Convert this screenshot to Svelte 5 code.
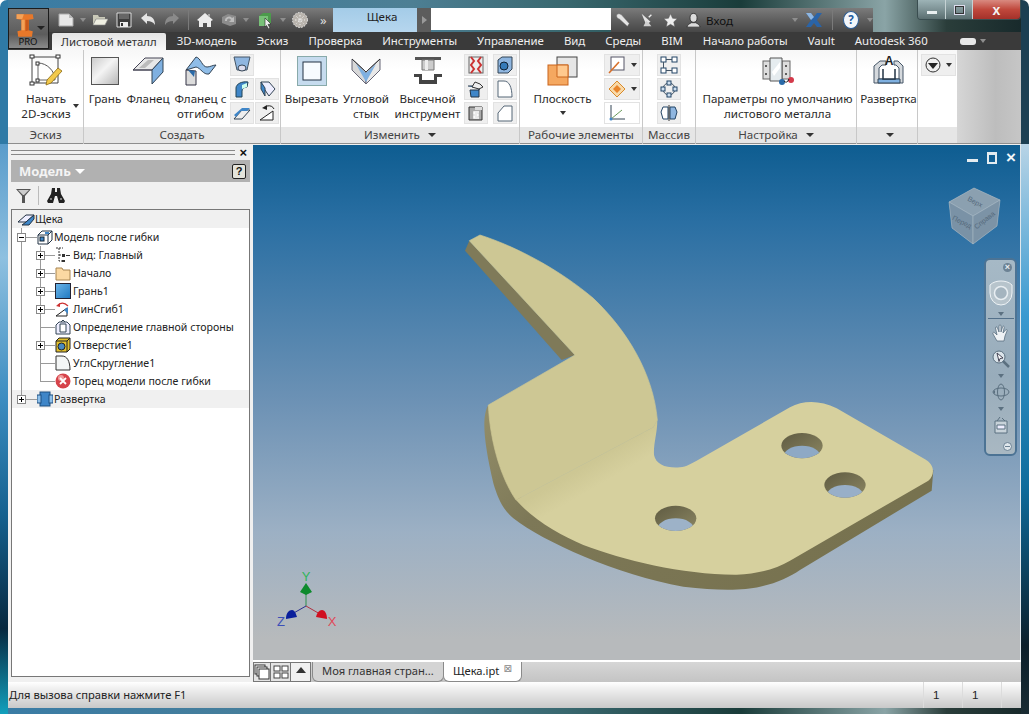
<script>
  const menu = ['3D-модель', 'Эскиз', 'Проверка', 'Инструменты', 'Управление', 'Вид', 'Среды', 'BIM', 'Начало работы', 'Vault', 'Autodesk 360'];
  const holes = [
    { x: 1056, y: 677, see: '#8ea9c5' },
    { x: 1185, y: 795, see: '#98afc8' },
    { x: 677, y: 895, see: '#9db2c8' }
  ];
</script>

<div class="window">
  <div class="titlebar">
    <div class="appbtn">
      <svg width="21" height="27" viewBox="0 0 26 30"><path d="M2 1h20l1 6-6 1v13l5 1-1 7H4l-1-7 5-1V8L2 7z" fill="#e8782a"/><path d="M8 8h4v13H8zM2 1h9l-2 6H2z" fill="#f4a258"/><path d="M17 8v13l-4 1V8z" fill="#c9591b"/></svg>
      <span class="caret app-caret"></span>
      <span class="pro">PRO</span>
    </div>
    <div class="qat">
      <svg width="16" height="16" viewBox="0 0 16 16"><path d="M1 2h10l4 4v8H1z" fill="#e8e8e8" stroke="#aaa"/><path d="M11 2v4h4" fill="#bbb"/></svg>
      <span class="caret dim tight"></span>
      <svg width="16" height="16" viewBox="0 0 16 16"><path d="M1 3h5l1 2h6v2H4L1 13z" fill="#c9c9b8"/><path d="M4 7h12l-3 6H1z" fill="#efefe2" stroke="#888" stroke-width=".6"/></svg>
      <svg width="16" height="16" viewBox="0 0 16 16"><path d="M1 1h14v14H1z" fill="#3d3d3d" stroke="#ddd"/><path d="M3 2h10v5H3z" fill="#666"/><path d="M4 10h8v5H4z" fill="#eee"/><path d="M5 11h2v3H5z" fill="#333"/></svg>
      <svg width="16" height="16" viewBox="0 0 16 16"><path d="M1 6l6-5v3c5 0 8 3 8 9-2-3-4-4-8-4v3z" fill="#e4e4e4"/></svg>
      <svg width="16" height="16" viewBox="0 0 16 16"><path d="M15 6L9 1v3C4 4 1 7 1 13c2-3 4-4 8-4v3z" fill="#8a8a8a"/></svg>
      <i class="qsep"></i>
      <svg width="16" height="16" viewBox="0 0 16 16"><path d="M0 8l8-7 8 7-2 1v6h-4v-4H6v4H2V9z" fill="#ececec"/><path d="M11 2h2v3l-2-1z" fill="#aaa"/></svg>
      <svg width="16" height="16" viewBox="0 0 16 16"><path d="M1 5l6-3 8 2v8l-6 2-8-3z" fill="#8c8c8c"/><path d="M4 9a4 4 0 0 1 7-3l2-1v5H8l2-2a2 2 0 0 0-4 1z" fill="#bdbdbd"/></svg>
      <span class="caret dim arrow-b"></span>
      <svg width="16" height="17" viewBox="0 0 16 17"><path d="M1 4l4-3h8v10l-3 3H1z" fill="#4c9a4c"/><path d="M1 4h9v10H1z" fill="#78c078"/><path d="M7 6l6 6-3 .5 2 3.5-1.500 1-2-3.500L7 15z" fill="#eee" stroke="#222" stroke-width=".6"/></svg>
      <span class="caret dim tight"></span>
      <svg width="16" height="16" viewBox="0 0 16 16"><circle cx="8" cy="8" r="7.500" fill="#b9b4ad"/><circle cx="8" cy="8" r="7.500" fill="none" stroke="#eee" stroke-dasharray="1.500 1.500" stroke-width="1"/><path d="M3 8h10M8 3v10M4.500 4.500l7 7M11.500 4.500l-7 7" stroke="#eee" stroke-dasharray="1.500 1.500"/></svg>
      <span class="more">»</span>
    </div>
    <div class="doc-title">Щека</div>
    <div class="search-arrow"><i></i></div>
    <div class="search"></div>
    <div class="tools">
      <svg width="18" height="18" viewBox="0 0 18 18"><path d="M2 3a4 4 0 0 1 6 1l8 9-2 3-9-8A4 4 0 0 1 2 3z" fill="#e4e4e4" stroke="#777" stroke-width=".5"/></svg>
      <svg width="18" height="18" viewBox="0 0 18 18"><path d="M3 2l10 9-5 3z" fill="#e4e4e4"/><path d="M8 10l-3 6h9l-3-4" fill="#cfcfcf"/><path d="M11 6l3-3" stroke="#eee" stroke-width="1.500"/></svg>
      <svg width="17" height="17" viewBox="0 0 17 17"><path d="M8.500 1l2.300 5 5.200.6-3.900 3.500 1.100 5.400-4.700-2.700-4.700 2.700 1.100-5.400L1 6.600 6.200 6z" fill="#eee" stroke="#555" stroke-width=".5"/></svg>
      <svg width="17" height="17" viewBox="0 0 17 17"><ellipse cx="8.500" cy="5.500" rx="4" ry="5" fill="#ddd" stroke="#333"/><path d="M1 16c1-3 3-4 5-5h5c2 1 4 2 5 5z" fill="#ddd" stroke="#333"/></svg>
      <span class="login">Вход</span>
      <span class="caret dim login-caret"></span>
      <svg width="18" height="16" viewBox="0 0 16 16"><path d="M0 1h5l3 4 3-4h5l-5 7 5 7h-5l-3-4-3 4H0l5-7z" fill="#2a64a8"/><path d="M0 1h5l3 4-3 3z" fill="#8fb6e0"/></svg>
      <i class="qsep sep-help"></i>
      <span class="help">?</span>
      <span class="caret dim"></span>
    </div>
    <div class="caption">
      <span class="cap-min"><i></i></span>
      <span class="cap-max"><i></i></span>
      <span class="cap-close">x</span>
    </div>
  </div>

  <div class="menubar">
    <span class="tab active">Листовой металл</span>
    {#each menu as item}
      <span class="tab">{item}</span>
    {/each}
    <span class="menu-extra"><i></i><span class="caret dim"></span></span>
  </div>

  <div class="ribbon">
    <section class="panel" style="width:76px">
      <div class="body">
        <div class="big wide">
          <div class="ico">
            <svg width="34" height="33" viewBox="0 0 34 33"><path d="M3 3h26v26H3z" fill="none" stroke="#444"/><path d="M9 9v17h17" fill="none" stroke="#666"/><path d="M9 9c9 0 17 8 17 17" fill="none" stroke="#555"/><g fill="#fff" stroke="#333"><rect x="1" y="1" width="4" height="3"/><rect x="27" y="1" width="4" height="3"/><rect x="1" y="28" width="4" height="3"/><rect x="7" y="8" width="3" height="3"/><rect x="7" y="25" width="3" height="3"/></g><path d="M18 26l11-12 4 3-11 12-5 2z" fill="#f2c94c" stroke="#8a6a12" stroke-width=".8"/></svg>
          </div>
          <span>Начать</span><span>2D-эскиз</span>
          <span class="caret drop-right"></span>
        </div>
      </div>
      <div class="label">Эскиз</div>
    </section>

    <section class="panel" style="width:197px">
      <div class="body">
        <div class="big" style="width:36px">
          <div class="ico"><svg width="28" height="28" viewBox="0 0 28 28"><defs><linearGradient id="face" x1="0" y1="0" x2="1" y2="1"><stop offset="0" stop-color="#c9c9c9"/><stop offset=".45" stop-color="#f4f4f4"/><stop offset="1" stop-color="#b5b5b5"/></linearGradient></defs><rect x=".5" y=".5" width="27" height="27" fill="url(#face)" stroke="#555"/></svg></div>
          <span>Грань</span>
        </div>
        <div class="big" style="width:50px">
          <div class="ico"><svg width="32" height="28" viewBox="0 0 32 28"><path d="M1 13L13 1h18L20 13z" fill="#e8e8e8" stroke="#445"/><path d="M20 13L31 1v14L20 27z" fill="#7fb0e0" stroke="#345"/><path d="M20 13h-19" stroke="#445"/><path d="M7 11l9-8h6l-9 8z" fill="#bbb"/></svg></div>
          <span>Фланец</span>
        </div>
        <div class="big" style="width:55px">
          <div class="ico"><svg width="32" height="30" viewBox="0 0 32 30"><path d="M1 14L11 1c5 1 6 10 11 10 3 0 6-2 9-2l-7 9c-6 1-8-6-13-7z" fill="#8fbde8" stroke="#345"/><path d="M1 14l10 1v14L1 29z" fill="#dcdcdc" stroke="#334"/><path d="M3 14l7 1-1 6z" fill="#2a6aa8"/></svg></div>
          <span>Фланец с</span><span>отгибом</span>
        </div>
        <div class="smalls two">
          <div class="sb"><svg width="18" height="18" viewBox="0 0 18 18"><path d="M1 1h16l-3 13H4z" fill="#8fb6e0" stroke="#456"/><ellipse cx="9" cy="12" rx="4" ry="3" fill="#dde" stroke="#345"/></svg></div>
          <div class="sb blank"></div>
          <div class="sb"><svg width="18" height="18" viewBox="0 0 18 18"><path d="M3 17V8c0-4 6-7 12-6l-1 5c-3 0-5 2-5 4v6z" fill="#3f86c8" stroke="#245"/><path d="M9 5l5-2v4l-5 2z" fill="#cfe"/></svg></div>
          <div class="sb"><svg width="18" height="18" viewBox="0 0 18 18"><path d="M3 2h8l6 7-6 7-6-9z" fill="#eef" stroke="#345"/><path d="M3 2v7l4 7V8z" fill="#3f86c8" stroke="#345"/></svg></div>
          <div class="sb"><svg width="18" height="18" viewBox="0 0 18 18"><path d="M1 15L9 6h8l-8 9z" fill="#eee" stroke="#345"/><path d="M1 11l8-7h8l-3 3H8l-5 6z" fill="#3f86c8"/></svg></div>
          <div class="sb"><svg width="18" height="18" viewBox="0 0 18 18"><path d="M2 16L15 7v9z" fill="#fff" stroke="#222"/><path d="M9 2a6 5 0 0 1 7 3" fill="none" stroke="#222"/><path d="M4 4l5-3v5z" fill="#222"/></svg></div>
        </div>
      </div>
      <div class="label">Создать</div>
    </section>

    <section class="panel" style="width:239px">
      <div class="body">
        <div class="big" style="width:55px">
          <div class="ico"><svg width="30" height="30" viewBox="0 0 30 30"><rect x=".5" y=".5" width="29" height="29" fill="#c6dbee" stroke="#8aa"/><rect x="6" y="6" width="18" height="18" fill="#f7fbff" stroke="#234"/></svg></div>
          <span>Вырезать</span>
        </div>
        <div class="big" style="width:54px">
          <div class="ico"><svg width="30" height="28" viewBox="0 0 30 28"><path d="M1 2l14 13v12L1 13z" fill="#d8d8d8" stroke="#667"/><path d="M29 2L15 15v12l14-14z" fill="#e8e8e8" stroke="#667"/><path d="M5 7l10 9 10-9-10 18z" fill="#7fb0e0"/><path d="M1 2l14 13L29 2" fill="none" stroke="#333"/></svg></div>
          <span>Угловой</span><span>стык</span>
        </div>
        <div class="big" style="width:69px">
          <div class="ico"><svg width="30" height="29" viewBox="0 0 30 29"><path d="M2 1h26v3H2z" fill="#555"/><path d="M9 4h12v10H9z" fill="#ccc" stroke="#777"/><path d="M12 4h3v10h-3z" fill="#eee"/><path d="M1 18h8v6h12v-6h8v3h-5v7H6v-7H1z" fill="#444"/></svg></div>
          <span>Высечной</span><span>инструмент</span>
        </div>
        <div class="smalls two spread">
          <div class="sb"><svg width="18" height="18" viewBox="0 0 18 18"><rect x="2" y="1" width="14" height="16" fill="#eee" stroke="#666"/><path d="M4 1l3 4-3 4 3 4-3 4M14 1l-3 4 3 4-3 4 3 4" fill="none" stroke="#c33" stroke-width="2"/></svg></div>
          <div class="sb"><svg width="18" height="18" viewBox="0 0 18 18"><path d="M2 4l4-3h10v12l-4 4H2z" fill="#8fb6e0" stroke="#345"/><circle cx="8" cy="10" r="4" fill="#357ab8" stroke="#123"/></svg></div>
          <div class="sb"><svg width="18" height="18" viewBox="0 0 18 18"><path d="M1 6h12l-1 4H3l1 7h8V9" fill="#3f86c8" stroke="#234"/><path d="M5 7l3-5 5 2 3 3-4 2z" fill="#eee" stroke="#333"/></svg></div>
          <div class="sb"><svg width="18" height="18" viewBox="0 0 18 18"><path d="M2 1h6c5 0 8 6 8 16H2z" fill="#fff" stroke="#567"/></svg></div>
          <div class="sb"><svg width="18" height="18" viewBox="0 0 18 18"><path d="M2 3h13v13H2z" fill="#aaa" stroke="#333"/><path d="M8 3h7v3H8z" fill="#ddd"/><path d="M12 8H7v2h4v2H7v2h5" fill="none" stroke="#fff" stroke-width="1.500"/></svg></div>
          <div class="sb"><svg width="18" height="18" viewBox="0 0 18 18"><path d="M2 9l6-7h8v15H2z" fill="#fff" stroke="#567"/></svg></div>
        </div>
      </div>
      <div class="label">Изменить <span class="caret lbl"></span></div>
    </section>

    <section class="panel" style="width:123px">
      <div class="body">
        <div class="big" style="width:79px">
          <div class="ico"><svg width="32" height="30" viewBox="0 0 32 30"><rect x="10" y="1" width="20" height="20" fill="#e6e6e6" stroke="#444"/><rect x="1" y="9" width="20" height="20" fill="#f5a860" stroke="#c9641c"/><path d="M10 9h11v12H10z" fill="#ffc98e" stroke="#c9641c"/></svg></div>
          <span>Плоскость</span>
          <span class="caret under"></span>
        </div>
        <div class="smalls one">
          <div class="sb split"><svg width="18" height="18" viewBox="0 0 18 18"><rect x="3" y="1" width="13" height="13" fill="#fff" stroke="#556"/><path d="M1 17L11 6" stroke="#d8702a" stroke-width="1.600"/></svg><span class="caret"></span></div>
          <div class="sb split"><svg width="18" height="18" viewBox="0 0 18 18"><path d="M9 1l8 8-8 8-8-8z" fill="#f8d9a8" stroke="#d98a2a"/><path d="M9 5l4 4-4 4-4-4z" fill="#e8842a"/></svg><span class="caret"></span></div>
          <div class="sb split plain"><svg width="18" height="18" viewBox="0 0 18 18"><path d="M3 1v14h14" fill="none" stroke="#345"/><path d="M3 15L14 6" stroke="#6a9a5a"/><circle cx="3" cy="15" r="1.500" fill="#3f86c8"/></svg></div>
        </div>
      </div>
      <div class="label">Рабочие элементы</div>
    </section>

    <section class="panel" style="width:53px">
      <div class="body center">
        <div class="smalls one">
          <div class="sb"><svg width="18" height="18" viewBox="0 0 18 18"><g fill="#fff" stroke="#246"><rect x="1" y="1" width="5" height="5"/><rect x="12" y="1" width="5" height="5"/><rect x="1" y="12" width="5" height="5"/><rect x="12" y="12" width="5" height="5"/></g><path d="M6 3.500h6M3.500 6v6M6 14.500h6" stroke="#456"/></svg></div>
          <div class="sb"><svg width="18" height="18" viewBox="0 0 18 18"><circle cx="9" cy="9" r="6" fill="none" stroke="#456"/><g fill="#cfe0f0" stroke="#246"><rect x="7" y="1" width="4" height="4"/><rect x="13" y="7" width="4" height="4"/><rect x="7" y="13" width="4" height="4"/><rect x="1" y="7" width="4" height="4"/></g></svg></div>
          <div class="sb"><svg width="18" height="18" viewBox="0 0 18 18"><path d="M8 3H3L1 8l2 7h5z" fill="#fff" stroke="#246"/><path d="M10 3h5l2 5-2 7h-5z" fill="#8fb6e0" stroke="#246"/><path d="M9 1v16" stroke="#333"/></svg></div>
        </div>
      </div>
      <div class="label">Массив</div>
    </section>

    <section class="panel" style="width:161px">
      <div class="body">
        <div class="big fill">
          <div class="ico"><svg width="32" height="30" viewBox="0 0 32 30"><rect x="1" y="5" width="8" height="18" fill="#ddd" stroke="#666"/><rect x="20" y="5" width="8" height="18" fill="#ddd" stroke="#666"/><path d="M8 2h12v23H8z" fill="#e6ecef" stroke="#555"/><path d="M10 16l8-10v6l-6 8z" fill="#fff"/><circle cx="4" cy="10" r="1" fill="#333"/><circle cx="4" cy="18" r="1" fill="#333"/><circle cx="24" cy="10" r="1" fill="#333"/><circle cx="24" cy="18" r="1" fill="#333"/><circle cx="20" cy="26" r="3" fill="#2a6aa8"/><circle cx="29" cy="24" r="3" fill="#d43a4a"/><path d="M22 25q3 3 5-2" fill="none" stroke="#222"/></svg></div>
          <span>Параметры по умолчанию</span><span>листового металла</span>
        </div>
      </div>
      <div class="label">Настройка <span class="caret lbl"></span></div>
    </section>

    <section class="panel" style="width:61px">
      <div class="body">
        <div class="big fill">
          <div class="ico"><svg width="32" height="32" viewBox="0 0 32 32"><path d="M1 28V11l6-5h6v4H9l-3 3v11h20V13l-3-3h-2V6h4l5 5v17z" fill="#d5d9dd" stroke="#456"/><path d="M5 28h22v-4H5z" fill="#7fb0e0" stroke="#345"/><path d="M10 14v10h12V14" fill="#fff" stroke="#234" stroke-width="1.500"/><text x="16" y="10" class="a-mark">A</text></svg></div>
          <span>Развертка</span>
        </div>
      </div>
      <div class="label"><span class="caret lbl"></span></div>
    </section>

    <section class="panel last" style="width:39px">
      <div class="body">
        <div class="sb split view-btn">
          <svg width="16" height="16" viewBox="0 0 16 16"><circle cx="8" cy="8" r="7" fill="#eee" stroke="#333"/><path d="M3 6h10l-5 6z" fill="#222"/></svg>
          <span class="caret"></span>
        </div>
      </div>
      <div class="label"></div>
    </section>
    <div class="ribbon-rest"></div>
  </div>

  <div class="main">
    <aside class="browser">
      <div class="grip"><i></i><b>×</b></div>
      <div class="browser-head"><strong>Модель</strong><span class="caret white"></span><em>?</em></div>
      <div class="browser-tools">
        <svg width="15" height="14" viewBox="0 0 15 14"><path d="M0 0h15L9 7v7H6V7z" fill="#555"/><path d="M2 1h11L8 6H7z" fill="#ccc"/></svg>
        <i></i>
        <svg width="18" height="15" viewBox="0 0 18 15"><path d="M5 0h3v4h2V0h3l1 6 4 7-1 2h-5l-2-7H8l-2 7H1l-1-2 4-7z" fill="#222"/><path d="M3 11h2M13 11h2" stroke="#ddd"/></svg>
      </div>
      <div class="tree">
        <div class="row shade root">
          <svg class="nd" width="18" height="14" viewBox="0 0 18 14"><path d="M1 10L9 3h8l-8 7z" fill="#eef" stroke="#234"/><path d="M9 10l8-7v4l-5 6H5z" fill="#3f86c8" stroke="#234"/></svg>
          <span>Щека</span>
        </div>
        <div class="row">
          <span class="joint l1"><b class="pm minus"></b></span>
          <svg class="nd" width="16" height="15" viewBox="0 0 16 15"><path d="M1 5l4-4h10v9l-4 4H1z" fill="#fff" stroke="#234"/><path d="M1 5h10v9M11 5l4-4" fill="none" stroke="#234"/><rect x="3" y="7" width="4" height="4" fill="#3f86c8" stroke="#123"/><rect x="8" y="2" width="4" height="2" fill="#3f86c8"/></svg>
          <span>Модель после гибки</span>
        </div>
        <div class="row">
          <span class="guide"></span><span class="joint l2"><b class="pm"></b></span>
          <svg class="nd" width="16" height="16" viewBox="0 0 16 16"><path d="M1 1h7M4 1v13h3M4 8h3" fill="none" stroke="#333" stroke-dasharray="2 1"/><path d="M7 7h3v3H7zM7 13h3v2H7zM11 8h4v1h-4z" fill="#333"/></svg>
          <span>Вид: Главный</span>
        </div>
        <div class="row">
          <span class="guide"></span><span class="joint l2"><b class="pm"></b></span>
          <svg class="nd" width="16" height="15" viewBox="0 0 16 15"><path d="M1 2h6l1 2h7v10H1z" fill="#fbd9a2" stroke="#a88652"/></svg>
          <span>Начало</span>
        </div>
        <div class="row">
          <span class="guide"></span><span class="joint l2"><b class="pm"></b></span>
          <svg class="nd" width="16" height="16" viewBox="0 0 16 16"><defs><linearGradient id="facet" x1="0" y1="0" x2="1" y2="1"><stop offset="0" stop-color="#6cb6ea"/><stop offset="1" stop-color="#1f78c0"/></linearGradient></defs><rect x=".5" y=".5" width="15" height="15" fill="url(#facet)" stroke="#223"/></svg>
          <span>Грань1</span>
        </div>
        <div class="row">
          <span class="guide"></span><span class="joint l2"><b class="pm"></b></span>
          <svg class="nd" width="16" height="16" viewBox="0 0 16 16"><path d="M1 15L12 7v8z" fill="#fff" stroke="#222"/><path d="M9 9l4-3v7z" fill="#3f86c8"/><path d="M3 4q5-4 10 1" fill="none" stroke="#c33" stroke-width="1.200"/><path d="M1 5l4-3v4z" fill="#c33"/></svg>
          <span>ЛинСгиб1</span>
        </div>
        <div class="row">
          <span class="guide"></span><span class="joint l2"></span>
          <svg class="nd" width="16" height="16" viewBox="0 0 16 16"><path d="M1 6l3-3h8l3 3v9H1z" fill="#eef" stroke="#345"/><path d="M5 5h6v8H5z" fill="#fff" stroke="#345"/><path d="M6 3l2-2 2 2" fill="none" stroke="#345"/></svg>
          <span>Определение главной стороны</span>
        </div>
        <div class="row">
          <span class="guide"></span><span class="joint l2"><b class="pm"></b></span>
          <svg class="nd" width="16" height="16" viewBox="0 0 16 16"><path d="M1 4l3-3h11v11l-3 3H1z" fill="#e3c02c" stroke="#222"/><path d="M1 4h11v11M12 4l3-3" fill="none" stroke="#222"/><circle cx="6.500" cy="9.500" r="3.500" fill="#4a8ac0" stroke="#222"/></svg>
          <span>Отверстие1</span>
        </div>
        <div class="row">
          <span class="guide"></span><span class="joint l2"></span>
          <svg class="nd" width="16" height="16" viewBox="0 0 16 16"><path d="M1 1h6c5 0 8 5 8 14H1z" fill="#f4f6f6" stroke="#333"/></svg>
          <span>УглСкругление1</span>
        </div>
        <div class="row">
          <span class="guide"></span><span class="joint l2 end"></span>
          <svg class="nd" width="16" height="16" viewBox="0 0 16 16"><circle cx="8" cy="8" r="7.500" fill="#d6434a"/><circle cx="6" cy="5" r="3" fill="#ef9a9a"/><path d="M5 5l6 6M11 5l-6 6" stroke="#fff" stroke-width="1.800"/></svg>
          <span>Торец модели после гибки</span>
        </div>
        <div class="row shade">
          <span class="joint l1 end"><b class="pm"></b></span>
          <svg class="nd" width="16" height="16" viewBox="0 0 16 16"><rect x="3" y="1" width="10" height="14" fill="#3f86c8" stroke="#1d4f80"/><rect x="0" y="4" width="4" height="8" fill="#8fc0ea" stroke="#1d4f80"/><rect x="12" y="4" width="4" height="8" fill="#8fc0ea" stroke="#1d4f80"/></svg>
          <span>Развертка</span>
        </div>
      </div>
    </aside>

    <div class="work">
      <div class="viewport">
        <div class="vp-controls">
          <i class="vp-min"></i>
          <i class="vp-max"></i>
          <span>×</span>
        </div>

        <svg class="part" width="500" height="380" viewBox="0 0 1500 1140">
          <defs>
            <linearGradient id="flat" gradientUnits="userSpaceOnUse" x1="410" y1="736" x2="445" y2="797"><stop offset="0" stop-color="#cdc794"/><stop offset="1" stop-color="#d6d09e"/></linearGradient>
            <linearGradient id="wall" x1="0" y1="0" x2="1" y2="0.4"><stop offset="0" stop-color="#938e69"/><stop offset=".3" stop-color="#7d7857"/><stop offset="1" stop-color="#77724f"/></linearGradient>
            <linearGradient id="bore" x1="0" y1="0" x2="1" y2="1"><stop offset="0" stop-color="#5f5b42"/><stop offset="1" stop-color="#8b8662"/></linearGradient>
            {#each holes as h, i}
              <clipPath id="hole{i}"><ellipse cx={h.x} cy={h.y} rx="62" ry="38"/></clipPath>
            {/each}
          </defs>
          <path d="M45 92L58 62L375 405L335 420Z" fill="#7f7a59"/>
          <path d="M115 555C95 590 100 660 130 790C145 840 160 870 190 895C280 965 500 1065 700 1100C800 1112 880 1112 930 1100C980 1090 1020 1070 1050 1050L1445 812L1450 750L1000 900L220 850Z" fill="url(#wall)"/>
          <path d="M610 622L622 600C622 640 610 670 612 705C618 735 650 745 690 742C710 740 725 730 740 722L1020 562C1060 540 1110 540 1160 565L1425 718C1455 735 1455 765 1435 782L1020 1022C980 1045 930 1062 860 1064C700 1065 520 1020 400 975C330 945 250 900 198 840Z" fill="url(#flat)"/>
          <path d="M58 62L90 45C200 80 330 150 430 235C530 330 610 460 622 600L610 622L198 840C150 770 120 660 115 555L375 405Z" fill="#cdc794" stroke="#cdc794" stroke-width="2"/>
          {#each holes as h, i}
            <ellipse cx={h.x} cy={h.y} rx="62" ry="38" fill="url(#bore)"/>
            <ellipse cx={h.x} cy={h.y + 34} rx="56" ry="34" fill={h.see} clip-path="url(#hole{i})"/>
          {/each}
        </svg>

        <svg class="triad" width="70" height="64" viewBox="0 0 70 64">
          <path d="M36 37V22" stroke="#2f8f4f"/>
          <path d="M36 37L22 45" stroke="#2a2f8f"/>
          <path d="M36 37L50 45" stroke="#b03040"/>
          <path d="M36 14l6 9-6 3-6-3z" fill="#0d8a2c"/>
          <path d="M16 50c0-6 3-9 6-9s4 4 5 7z" fill="#0a1f9c"/>
          <path d="M46 48c1-4 3-7 6-7s5 4 5 9z" fill="#d01020"/>
          <text x="36" y="12" class="ax y">Y</text>
          <text x="11" y="57" class="ax z">Z</text>
          <text x="62" y="57" class="ax x">X</text>
        </svg>

        <svg class="cube" width="56" height="60" viewBox="0 0 56 60">
          <path d="M26 1L52 13L49 39L25 57L4 41L1 15Z" fill="#7f96a8"/>
          <path d="M26 1L52 13L25 29L1 15Z" fill="#8ba0b0" stroke="#a7b8c4" stroke-width=".6"/>
          <path d="M1 15L25 29V57L4 41Z" fill="#7a92a6" stroke="#a7b8c4" stroke-width=".6"/>
          <path d="M25 29L52 13L49 39L25 57Z" fill="#7c93a6" stroke="#a7b8c4" stroke-width=".6"/>
          <text transform="translate(26 17) rotate(28)" class="cube-t">Верх</text>
          <text transform="translate(13 37) rotate(26)" class="cube-t">Перед</text>
          <text transform="translate(38 35) rotate(-38)" class="cube-t">Справа</text>
        </svg>

        <div class="navbar">
          <span class="nav-x">×</span>
          <svg width="24" height="26" viewBox="0 0 24 26"><path d="M12 1c4 0 8 1 11 4v8a11 12 0 0 1-22 0V5c3-3 7-4 11-4z" fill="#b7c4cc" stroke="#eef3f6"/><circle cx="12" cy="13" r="6.500" fill="#a4b4bf" stroke="#e8eef2" stroke-width="1.500"/></svg>
          <span class="caret nav-c first"></span>
          <hr/>
          <svg width="18" height="18" viewBox="0 0 18 18"><path d="M5 17L1 10c-1-2 1-2 2-1l2 2L3.500 4c0-1.500 1.500-1.500 2 0L7 8V2c0-1.500 2-1.500 2 0v6l1.500-5c.5-1.500 2-1 1.700.5L11 9l2.500-3c1-1 2-.5 1.500 1l-2 5-1 5z" fill="#eef2f5" stroke="#5b7080" stroke-width=".8"/></svg>
          <svg width="18" height="18" viewBox="0 0 18 18"><circle cx="7" cy="7" r="6" fill="#dbe4ea" stroke="#5b7080"/><path d="M11 11l6 6" stroke="#5b7080" stroke-width="2.500"/><path d="M5 3l6 5-3 .5-1 3z" fill="#fff" stroke="#445"/></svg>
          <span class="caret nav-c"></span>
          <svg width="18" height="18" viewBox="0 0 18 18"><ellipse cx="9" cy="9" rx="8" ry="4" fill="none" stroke="#5b7080"/><ellipse cx="9" cy="9" rx="3.500" ry="8" fill="none" stroke="#5b7080"/><path d="M1 9l2-2v4z" fill="#5b7080"/></svg>
          <span class="caret nav-c"></span>
          <svg width="18" height="18" viewBox="0 0 18 18"><path d="M3 5h12v12H3z" fill="#c7d2d9" stroke="#5b7080"/><path d="M5 9h8v4H5z" fill="#eef" stroke="#5b7080"/><path d="M5 5l3-4M13 5L10 2" stroke="#5b7080"/></svg>
          <span class="nav-end"></span>
        </div>
      </div>
      <div class="tabs">
        <div class="sq"><svg width="16" height="16" viewBox="0 0 16 16"><g fill="#fff" stroke="#333"><rect x="1" y="1" width="10" height="9"/><rect x="3" y="3" width="10" height="9"/><rect x="5" y="5" width="10" height="10"/></g></svg></div>
        <div class="sq"><svg width="16" height="16" viewBox="0 0 16 16"><g fill="#fff" stroke="#444"><rect x="1" y="2" width="6" height="5"/><rect x="9" y="2" width="6" height="5"/><rect x="1" y="9" width="6" height="5"/><rect x="9" y="9" width="6" height="5"/></g></svg></div>
        <div class="sq up"><span class="caret flip"></span></div>
        <div class="doc-tab">Моя главная стран...</div>
        <div class="doc-tab on">Щека.ipt<i>⊠</i></div>
      </div>
    </div>
  </div>

  <div class="status">
    <span class="hint">Для вызова справки нажмите F1</span>
    <span class="cell">1</span>
    <span class="cell">1</span>
    <span class="cell end"></span>
  </div>
</div>

<style>
  :global(body) {
    margin: 0;
    background: #fff;
    overflow: hidden;
  }

  .window {
    width: 1029px;
    height: 714px;
    box-sizing: border-box;
    padding: 0 8px 6px;
    display: flex;
    flex-direction: column;
    border-radius: 7px 7px 0 0;
    font: 11.6px/15px "Noto Sans", sans-serif;
    color: #2b2b2b;
    background:
      linear-gradient(90deg, #2f7aa6 0 8px, transparent 8px, transparent 1021px, #1c3f52 1021px),
      linear-gradient(90deg, #3a7ca5, #4d7f94 40%, #39686f 55%, #1a3c3a 72%, #8aa4a6 86%, #2a3d3a 92%, #16282a);
    overflow: hidden;
    position: relative;
  }
  .window::before,
  .window::after {
    content: "";
    position: absolute;
    top: 144px;
    bottom: 0;
    width: 8px;
  }
  .window::before {
    left: 0;
    background: linear-gradient(#5a9ccb, #8ec0e0 20%, #3b8cc0 45%, #15618f 65%, #07283f 85%, #12a0bd);
  }
  .window::after {
    right: 0;
    background: linear-gradient(#b8d4e6, #3a9ad0 30%, #0f6c9c 60%, #0b1f2b 88%, #1a2c33);
  }

  .caret {
    display: inline-block;
    width: 0;
    height: 0;
    border: 3px solid transparent;
    border-top: 4px solid #333;
    border-bottom: 0;
  }
  .caret.dim { border-top-color: #8e8e8e; }
  .caret.white { border-top-color: #fff; border-width: 5px 5px 0; margin-left: 4px; }
  .caret.lbl { margin-left: 5px; vertical-align: 2px; border-width: 4px 4px 0; }
  .caret.flip { border-top: 0; border-bottom: 5px solid #333; border-width: 0 5px 6px; }

  .titlebar {
    height: 32px;
    flex: none;
    box-sizing: border-box;
    padding-top: 8px;
    display: flex;
    position: relative;
  }
  .appbtn {
    position: absolute;
    left: 0;
    top: 8px;
    width: 41px;
    height: 41px;
    box-sizing: border-box;
    border: 1px solid #1c1c1c;
    background: linear-gradient(#777, #5c5c5c 65%, #8a8a8a);
    z-index: 2;
  }
  .appbtn svg { position: absolute; left: 6px; top: 3px; }
  .app-caret { position: absolute; right: 3px; top: 17px; border-width: 4px 4px 0; border-top-color: #222; }
  .pro {
    position: absolute;
    left: 3px;
    width: 32px;
    bottom: 0;
    font-size: 9.5px;
    line-height: 12px;
    text-align: center;
    color: #111;
  }
  .qat {
    margin-left: 41px;
    width: 284px;
    box-sizing: border-box;
    padding-left: 9px;
    display: flex;
    align-items: center;
    gap: 8px;
    background: linear-gradient(#7b7b7b, #5d5d5d 50%, #444);
  }
  .tight { margin: 0 -2px; }
  .arrow-b { margin: 0 1px 0 -2px; }
  .qsep { width: 1px; height: 20px; background: #7a7a7a; }
  .sep-help { margin: 0 2px; }
  .more { margin-left: 4px; color: #ddd; font-size: 13px; line-height: 13px; }
  .doc-title {
    width: 84px;
    box-sizing: border-box;
    padding-left: 14px;
    text-align: center;
    line-height: 17px;
    color: #222;
    background: linear-gradient(#a4cce8, #b6d6ee);
  }
  .search-arrow {
    width: 14px;
    background: #5c5c5c;
    display: flex;
    align-items: center;
    justify-content: center;
  }
  .search-arrow i {
    border: 4px solid transparent;
    border-left: 5px solid #999;
    border-right: 0;
  }
  .search { width: 180px; height: 22px; background: #fff; }
  .tools {
    width: 262px;
    box-sizing: border-box;
    padding-left: 4px;
    display: flex;
    align-items: center;
    gap: 8px;
    background: linear-gradient(#7b7b7b, #5f5f5f 50%, #474747);
  }
  .login { color: #111; margin-left: -3px; }
  .login-caret { margin-left: 51px; }
  .help {
    width: 16px;
    height: 16px;
    border-radius: 50%;
    background: #f2f6fa;
    border: 1px solid #2a5c96;
    color: #1c5aa0;
    font-weight: 700;
    text-align: center;
    line-height: 16px;
  }
  .caption {
    margin-left: auto;
    margin-top: -8px;
    height: 20px;
    display: flex;
    border: 1px solid #3a4d50;
    border-top: 0;
    border-radius: 0 0 4px 4px;
    overflow: hidden;
    box-sizing: border-box;
  }
  .caption span {
    display: flex;
    align-items: center;
    justify-content: center;
    height: 100%;
    background: linear-gradient(#9db3b6, #7d9295 50%, #5a6e70);
    border-right: 1px solid #c5d2d4;
  }
  .cap-min { width: 27px; }
  .cap-max { width: 26px; }
  .cap-min i { width: 10px; height: 3px; background: #e8eef0; margin-top: 6px; }
  .cap-max i { width: 7px; height: 6px; border: 1px solid #333; outline: 1px solid #dde; }
  .caption .cap-close {
    width: 47px;
    border: 0;
    background: linear-gradient(#d98a80, #c0483c 50%, #a4312a);
    color: #f4f4f4;
    font: 700 14px/14px "Liberation Sans", sans-serif;
  }

  .menubar {
    height: 18px;
    flex: none;
    box-sizing: border-box;
    padding-left: 44px;
    display: flex;
    align-items: flex-end;
    background: #3a3a3a;
  }
  .tab {
    height: 18px;
    font-size: 11.4px;
    line-height: 18px;
    padding: 0 10px;
    color: #efefef;
    white-space: nowrap;
  }
  .tab.active {
    margin-right: 1px;
    padding: 0 9px;
    height: 17px;
    line-height: 17px;
    color: #333;
    background: linear-gradient(#e4e4e4, #f8f8f8);
    border-radius: 2px 2px 0 0;
  }
  .menu-extra {
    margin-left: 22px;
    display: flex;
    align-items: center;
    gap: 4px;
    height: 18px;
  }
  .menu-extra i {
    width: 16px;
    height: 7px;
    background: #e8e8e8;
    border-radius: 3px;
  }

  .ribbon {
    height: 94px;
    flex: none;
    display: flex;
    background: #fff;
    box-shadow: inset 0 -1px #8e8e8e;
  }
  .panel {
    box-sizing: border-box;
    flex: none;
    display: flex;
    flex-direction: column;
    border-right: 1px solid #c8c8c8;
  }
  .panel.last { border-right: 0; }
  .ribbon-rest {
    flex: 1;
    background: linear-gradient(90deg, #d6d6d6, #bdbdbd 60%, #c6c6c6);
    border-bottom: 1px solid #8e8e8e;
  }
  .body {
    height: 77px;
    flex: none;
    display: flex;
    justify-content: flex-start;
    padding-left: 3px;
    background: linear-gradient(#f7f7f7, #fff 25%);
  }
  .body.center { justify-content: center; padding: 0; }
  .label {
    height: 17px;
    box-sizing: border-box;
    border-bottom: 1px solid #8e8e8e;
    line-height: 15px;
    text-align: center;
    background: #e6e6e6;
    color: #444;
    white-space: nowrap;
  }

  .big {
    flex: none;
    position: relative;
    display: flex;
    flex-direction: column;
    align-items: center;
    white-space: nowrap;
  }
  .big.wide { width: 70px; }
  .big.fill { flex: 1; }
  .ico {
    height: 41px;
    display: flex;
    align-items: center;
    justify-content: center;
  }
  .drop-right { position: absolute; right: 2px; top: 54px; }
  .under { margin-top: 5px; }

  .smalls {
    display: grid;
    grid-template-rows: repeat(3, 22px);
    gap: 2px;
    margin-top: 4px;
  }
  .smalls.two {
    grid-template-columns: 24px 24px;
    margin-left: 2px;
    column-gap: 1px;
  }
  .smalls.two.spread { column-gap: 5px; }
  .smalls.one { grid-template-columns: 36px; margin-left: 2px; }
  .body.center .smalls.one { grid-template-columns: 24px; margin-left: 0; }
  .sb {
    box-sizing: border-box;
    display: flex;
    align-items: center;
    justify-content: center;
    gap: 5px;
    background: #efefef;
    border: 1px solid #e2e2e2;
  }
  .sb.blank { visibility: hidden; }
  .sb.split { justify-content: flex-start; padding-left: 3px; }
  .sb.plain { background: #fff; }
  .view-btn { width: 35px; height: 22px; margin: 4px 0 0 0; }

  .main {
    flex: 1;
    min-height: 0;
    display: flex;
    background: #f0f0f0;
  }
  .browser {
    width: 245px;
    flex: none;
    box-sizing: border-box;
    padding: 1px 3px 5px;
    display: flex;
    flex-direction: column;
  }
  .grip {
    height: 15px;
    display: flex;
    align-items: center;
    gap: 4px;
    flex: none;
  }
  .grip i {
    flex: 1;
    height: 3px;
    border-top: 1px solid #888;
    border-bottom: 1px solid #888;
  }
  .grip b { font: 700 13px/13px "Liberation Sans", sans-serif; color: #111; margin-right: 3px; }
  .browser-head {
    height: 22px;
    flex: none;
    box-sizing: border-box;
    padding-left: 8px;
    display: flex;
    align-items: center;
    background: #b1b1b1;
  }
  .browser-head strong { color: #f4f4f4; font-size: 13px; }
  .browser-head em {
    margin-left: auto;
    margin-right: 4px;
    width: 12px;
    height: 13px;
    border: 1px solid #222;
    border-radius: 2px;
    background: #e4e4dc;
    color: #111;
    font: 700 11px/13px "Liberation Sans", sans-serif;
    text-align: center;
  }
  .browser-tools {
    height: 27px;
    flex: none;
    box-sizing: border-box;
    padding-left: 5px;
    display: flex;
    align-items: center;
    gap: 7px;
  }
  .browser-tools i { width: 1px; height: 19px; background: #bbb; }
  .browser-tools svg:last-child { margin-left: 1px; }
  .tree {
    flex: 1;
    border: 1px solid #777;
    background: #fff;
    color: #222;
    font-size: 10.6px;
  }
  .row {
    height: 18px;
    display: flex;
    align-items: center;
    white-space: nowrap;
  }
  .row.root { padding-left: 5px; }
  .row.root .nd { margin-right: 0; }
  .row.shade { background: #f0f0f0; }
  .nd { flex: none; margin-right: 2px; }
  .joint.l1 + .nd { margin-right: 1px; }
  .guide,
  .joint {
    flex: none;
    height: 18px;
    position: relative;
    display: block;
  }
  .guide { width: 19px; }
  .joint.l1 { width: 25px; }
  .joint.l2 { width: 24px; }
  .guide::before,
  .joint::before {
    content: "";
    position: absolute;
    left: 9px;
    top: 0;
    bottom: 0;
    width: 1px;
    background: #9a9a9a;
  }
  .joint.end::before { bottom: 9px; }
  .joint::after {
    content: "";
    position: absolute;
    left: 9px;
    right: 0;
    top: 9px;
    height: 1px;
    background: #9a9a9a;
  }
  .pm {
    position: absolute;
    left: 5px;
    top: 5px;
    width: 9px;
    height: 9px;
    box-sizing: border-box;
    border: 1px solid #888;
    background: linear-gradient(#000, #000) center / 5px 1px no-repeat,
      linear-gradient(#000, #000) center / 1px 5px no-repeat, #fff;
    z-index: 1;
  }
  .pm.minus {
    background: linear-gradient(#000, #000) center / 5px 1px no-repeat, #fff;
  }

  .work {
    flex: 1;
    min-width: 0;
    display: flex;
    flex-direction: column;
  }
  .viewport {
    flex: 1;
    margin-top: 1px;
    position: relative;
    overflow: hidden;
    border-right: 1px solid #dfe7ec;
    background: linear-gradient(#0e5d91, #2a6fa3 15%, #6d92b5 50%, #9cb0c4 75%, #b7babc 96%);
  }
  .part { position: absolute; left: 197px; top: 75px; }
  .triad { position: absolute; left: 17px; top: 424px; }
  .ax { font: 13px "Liberation Sans", sans-serif; text-anchor: middle; }
  .ax.y { fill: #31b55a; }
  .ax.z { fill: #3b4fb8; }
  .ax.x { fill: #e04858; }
  .cube { position: absolute; left: 695px; top: 42px; }
  .cube-t {
    font: 7px "Liberation Sans", "Noto Sans", sans-serif;
    fill: #55697b;
    text-anchor: middle;
  }
  .a-mark {
    font: 700 12px "Liberation Sans", sans-serif;
    fill: #222;
    text-anchor: middle;
  }
  .vp-controls {
    position: absolute;
    right: 4px;
    top: 7px;
    display: flex;
    align-items: center;
    gap: 9px;
    color: #f2f6f8;
    font: 700 17px/12px "Liberation Sans", sans-serif;
  }
  .vp-min { width: 11px; height: 3px; background: #e4ecf0; margin-top: 5px; }
  .vp-max { width: 6px; height: 7px; border: 2px solid #e4ecf0; border-top-width: 3px; }
  .navbar {
    position: absolute;
    left: 731px;
    top: 113px;
    width: 33px;
    height: 198px;
    box-sizing: border-box;
    padding-top: 20px;
    display: flex;
    flex-direction: column;
    align-items: center;
    border: 2px solid #4c7394;
    border-radius: 6px;
    background: linear-gradient(#a6b9c6, #98acbb 60%, #a9b8c2);
  }
  .navbar svg { flex: none; margin-bottom: 8px; }
  .navbar hr {
    width: 26px;
    margin: 0 0 5px;
    border: 0;
    border-top: 1px solid #53708a;
  }
  .nav-c { border-top-color: #5b7080; margin: -2px 0 5px; }
  .nav-c.first { margin-bottom: 2px; }
  .nav-x {
    position: absolute;
    top: 3px;
    right: 3px;
    width: 9px;
    height: 9px;
    border-radius: 50%;
    background: #6c8294;
    color: #e8eef2;
    font: 700 9px/9px "Liberation Sans", sans-serif;
    text-align: center;
  }
  .nav-end {
    position: absolute;
    right: 3px;
    bottom: 3px;
    width: 9px;
    height: 9px;
    border-radius: 50%;
    background: linear-gradient(#6c8294, #6c8294) center / 5px 1px no-repeat, #dfe7ec;
    border: 1px solid #6c8294;
    box-sizing: border-box;
  }

  .tabs {
    height: 22px;
    flex: none;
    box-sizing: border-box;
    border-top: 2px solid #fff;
    display: flex;
    background: linear-gradient(#d6d6d6, #c4c4c4);
  }
  .sq {
    width: 20px;
    height: 20px;
    box-sizing: border-box;
    display: flex;
    align-items: center;
    justify-content: center;
    border: 1px solid #777;
    border-left-width: 0;
    background: #e4e4e4;
  }
  .sq:first-child { border-left-width: 1px; width: 18px; }
  .sq.up { align-items: flex-start; padding-top: 4px; background: #f0f0f0; }
  .doc-tab {
    box-sizing: border-box;
    width: 132px;
    height: 20px;
    margin-left: 1px;
    padding-left: 9px;
    font-size: 11.2px;
    line-height: 17px;
    color: #333;
    background: #d4d4d4;
    border: 1px solid #8a8a8a;
    border-top: 0;
    border-radius: 0 0 6px 6px;
    white-space: nowrap;
  }
  .doc-tab.on {
    margin-left: -1px;
    width: 79px;
    background: #fff;
    color: #222;
  }
  .doc-tab i { font: 10px/12px "DejaVu Sans", sans-serif; color: #888; margin-left: 4px; vertical-align: 3px; }

  .status {
    height: 26px;
    flex: none;
    display: flex;
    line-height: 25px;
    background: linear-gradient(#fff, #f0f0f0 25%, #c9c9c9);
    color: #222;
  }
  .hint { flex: 1; padding-left: 1px; font-size: 11.2px; }
  .cell {
    width: 39px;
    box-sizing: border-box;
    padding-left: 9px;
    border-left: 1px solid #dcdcdc;
    font-family: "Liberation Sans", sans-serif;
  }
  .cell.end { width: 20px; }
</style>
